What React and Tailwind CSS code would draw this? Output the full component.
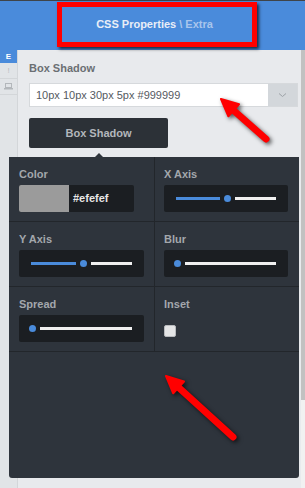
import React from 'react';

const Slider = ({ box, blue, blueW }) => (
    <div className={`h-[27px] bg-[#1b1e22] rounded-[2px] flex items-center ${box}`}>
        {blue && <div className={`h-[3px] bg-[#4a8bdb] ${blueW}`}></div>}
        <div className="w-[7px] h-[7px] rounded-full bg-[#4a8bdb] mx-[4px]"></div>
        <div className="h-[3px] flex-1 bg-[#f0f0f0]"></div>
    </div>
);

const Label = ({ children }) => (
    <div className="h-[13px] leading-[13px] text-[11px] font-bold text-[#a3a7ac]">{children}</div>
);

const Arrows = () => (
    <svg className="absolute inset-0 pointer-events-none drop-shadow-[2px_2px_2px_rgba(0,0,0,0.65)]" width="305" height="488" viewBox="0 0 305 488">
        <line x1="266" y1="139" x2="232" y2="109" stroke="#ff0000" strokeWidth="7" strokeLinecap="round" />
        <polygon points="221,99 239,104.3 228.4,116.3" fill="#ff0000" stroke="#ff0000" strokeWidth="2" strokeLinejoin="round" />
        <line x1="233" y1="437" x2="177" y2="386" stroke="#ff0000" strokeWidth="7" strokeLinecap="round" />
        <polygon points="166,376 184,381.5 173.2,393.3" fill="#ff0000" stroke="#ff0000" strokeWidth="2" strokeLinejoin="round" />
    </svg>
);

export default function App() {
    return (
        <div className="relative w-[305px] h-[488px] overflow-hidden bg-[#e8eaed] [font-family:'Liberation_Sans',Arial,sans-serif]">
            {/* header */}
            <div className="h-[50px] border-t border-[#3f4449] bg-[#4a8bdb] pl-[57px] pt-[1px]">
                <div className="w-[200px] h-[45px] border-[5px] border-[#ff0000] shadow-[2px_2px_3px_rgba(0,0,0,0.7)] flex items-center justify-center pr-[5px] text-[11px] font-bold">
                    <span className="text-[#e9eef7]">CSS Properties</span>
                    <span className="text-[#a9c5ec] ml-[3px]">\ Extra</span>
                </div>
            </div>

            <div className="flex h-[438px]">
                {/* sidebar */}
                <div className="w-[18px] bg-[#e1e4e7] border-r border-[#d3d6d9] flex flex-col">
                    <div className="h-[13px] bg-[#4a8bdb] flex items-center justify-center text-[8px] font-bold text-white">E</div>
                    <div className="h-[16px] border-b border-[#d3d6d9] flex items-center justify-center text-[8px] text-[#b9bcc0]">!</div>
                    <div className="h-[16px] border-b border-[#d3d6d9] flex items-center justify-center">
                        <svg width="9" height="7" viewBox="0 0 9 7">
                            <rect x="1.5" y="0.5" width="6" height="4" fill="none" stroke="#b3b7bb" />
                            <rect x="0" y="5" width="9" height="1.5" fill="#b3b7bb" />
                        </svg>
                    </div>
                </div>

                {/* content */}
                <div className="w-[283px] pl-[11px] pr-[3px] flex flex-col">
                    <div className="pt-[10px] h-[33px] text-[11px] font-bold text-[#6b6f73]">Box Shadow</div>
                    <div className="h-[24px] bg-white border border-[#d6d9dc] flex items-center">
                        <div className="flex-1 pl-[6px] text-[11px] text-[#555a5f]">10px 10px 30px 5px #999999</div>
                        <div className="w-[29px] h-full bg-[#d3d7db] flex items-center justify-center">
                            <svg width="9" height="6" viewBox="0 0 9 6">
                                <path d="M1 1.5 L4.5 4.5 L8 1.5" fill="none" stroke="#9da2a7" strokeWidth="1" />
                            </svg>
                        </div>
                    </div>
                    <button className="mt-[11px] w-[139px] h-[30px] bg-[#2c3137] rounded-[2px] text-[11px] font-bold text-[#b3b7bc]">Box Shadow</button>
                    <div className="mt-[5px] ml-[66px] w-0 h-0 border-l-[4px] border-r-[4px] border-b-[4px] border-l-transparent border-r-transparent border-b-[#2e343c]"></div>

                    {/* popover */}
                    <div className="-ml-[20px] w-[290px] h-[321px] bg-[#2e343c] rounded-b-[3px]">
                        <div className="grid grid-cols-[146px_144px]">
                            <div className="h-[65px] border-b border-r border-[#22262b] pl-[10px] pt-[11px]">
                                <Label>Color</Label>
                                <div className="mt-[4px] w-[115px] h-[27px] rounded-[2px] bg-[#1b1e22] flex overflow-hidden">
                                    <div className="w-[50px] bg-[#9b9b9b]"></div>
                                    <div className="pl-[4px] flex items-center text-[11px] font-bold text-[#e6e6e6]">#efefef</div>
                                </div>
                            </div>
                            <div className="h-[65px] border-b border-[#22262b] pl-[9px] pt-[11px]">
                                <Label>X Axis</Label>
                                <div className="mt-[4px]">
                                    <Slider box="w-[124px] pl-[12px] pr-[12px]" blue blueW="w-[44px]" />
                                </div>
                            </div>
                            <div className="h-[65px] border-b border-r border-[#22262b] pl-[10px] pt-[11px]">
                                <Label>Y Axis</Label>
                                <div className="mt-[4px]">
                                    <Slider box="w-[125px] pl-[12px] pr-[12px]" blue blueW="w-[45px]" />
                                </div>
                            </div>
                            <div className="h-[65px] border-b border-[#22262b] pl-[9px] pt-[11px]">
                                <Label>Blur</Label>
                                <div className="mt-[4px]">
                                    <Slider box="w-[124px] pl-[6px] pr-[12px]" />
                                </div>
                            </div>
                            <div className="h-[65px] border-b border-r border-[#22262b] pl-[10px] pt-[11px]">
                                <Label>Spread</Label>
                                <div className="mt-[4px]">
                                    <Slider box="w-[125px] pl-[6px] pr-[12px]" />
                                </div>
                            </div>
                            <div className="h-[65px] border-b border-[#22262b] pl-[9px] pt-[11px]">
                                <Label>Inset</Label>
                                <div className="mt-[14px] w-[12px] h-[12px] rounded-[2px] bg-[#e4e5e6] border border-[#b8babd]"></div>
                            </div>
                        </div>
                    </div>
                </div>

                {/* scrollbar */}
                <div className="w-[4px] bg-[#f1f1f1] flex flex-col">
                    <div className="h-[350px] bg-[#c1c1c1]"></div>
                </div>
            </div>

            <Arrows />
        </div>
    );
}
